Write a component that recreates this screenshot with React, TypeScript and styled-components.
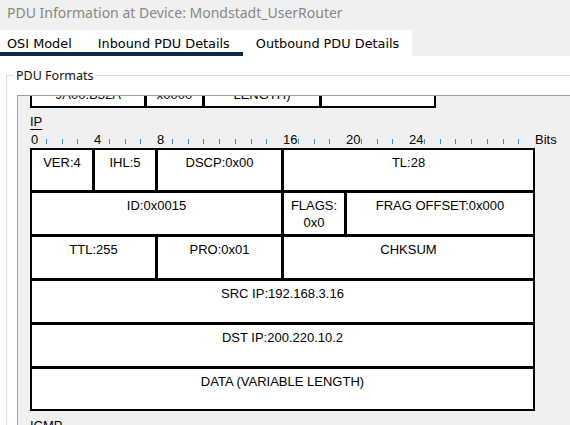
import React from "react";
import styled, { createGlobalStyle } from "styled-components";

const GlobalStyle = createGlobalStyle`
  html, body {
    margin: 0;
    padding: 0;
    background: #ffffff;
    overflow: hidden;
  }
  #root {
    width: 570px;
    height: 425px;
    overflow: hidden;
  }
`;

const Window = styled.div`
  width: 570px;
  height: 425px;
  background: #ffffff;
  overflow: hidden;
  display: flex;
  flex-direction: column;
  & > * {
    flex: none;
  }
`;

const TitleBar = styled.div`
  height: 30px;
  box-sizing: border-box;
  padding: 3px 0 0 7px;
  background: #f0f0f0;
  color: #878787;
  font-family: "Noto Sans", "Open Sans", sans-serif;
  font-size: 14px;
  line-height: 20px;
  white-space: nowrap;
`;

const TabBar = styled.div`
  height: 26px;
  background: #f0f0f0;
  display: flex;
`;

const TabStrip = styled.div`
  display: flex;
  background: #ffffff;
`;

const Tab = styled.div<{ $underlined?: boolean; $first?: boolean }>`
  height: 26px;
  box-sizing: border-box;
  padding: 6px 13px 0 ${(p) => (p.$first ? "7px" : "13px")};
  font-family: "DejaVu Sans", Verdana, sans-serif;
  font-size: 12.85px;
  line-height: 15px;
  color: #000000;
  white-space: nowrap;
  border-bottom: 4px solid ${(p) => (p.$underlined ? "#0f2847" : "transparent")};
`;

const GroupBox = styled.fieldset`
  margin: 12px 0 0 6px;
  padding: 12px 0 0 7px;
  width: 620px;
  height: 420px;
  box-sizing: border-box;
  border: 1px solid #dcdcdc;
  min-width: 0;
`;

const GroupLegend = styled.legend`
  padding: 0 2px;
  font-family: "Noto Sans", "Open Sans", sans-serif;
  font-size: 12.5px;
  line-height: 15px;
  color: #111111;
`;

const Panel = styled.div`
  margin-left: 3px;
  height: 400px;
  overflow: hidden;
  background: #f0f0f0;
  border-top: 1px solid #a0a0a0;
  border-left: 1px solid #a0a0a0;
  padding-left: 12px;
  font-family: "Liberation Sans", Arial, sans-serif;
  font-size: 13px;
  color: #000000;
`;

const EthTable = styled.div`
  margin-top: -33px;
  display: grid;
  grid-template-columns: 112px 55px 114px 112px;
  grid-template-rows: 41px;
  column-gap: 3px;
  padding: 2px;
  background: #000000;
  width: max-content;
`;

const EthCell = styled.div`
  background: #ffffff;
  display: flex;
  align-items: flex-end;
  justify-content: center;
  padding-bottom: 3px;
  box-sizing: border-box;
  line-height: 16px;
  white-space: nowrap;
  overflow: hidden;
`;

const SectionTitle = styled.div<{ $gap: number }>`
  margin-top: ${(p) => p.$gap}px;
  line-height: 16px;
  text-decoration: underline;
  text-underline-offset: 3px;
  width: max-content;
`;

const Ruler = styled.div`
  margin-top: 3px;
  height: 15px;
  display: flex;
  align-items: flex-start;
`;

const Slot = styled.div`
  width: 15.75px;
  flex: none;
  height: 15px;
`;

const Tick = styled.div`
  margin-top: 6px;
  width: 1px;
  height: 5px;
  background: #3a8ad6;
`;

const SlotNumber = styled.div`
  line-height: 14px;
  white-space: nowrap;
  padding-left: 1px;
`;

const BitsLabel = styled.div`
  line-height: 14px;
  padding-left: 1px;
`;

const FieldTable = styled.div`
  width: 505px;
  box-sizing: border-box;
  display: grid;
  grid-template-columns: repeat(32, minmax(0, 1fr));
  grid-template-rows: 40px 41px 41px 41px 41px 40px;
  gap: 3px;
  padding: 2px;
  background: #000000;
`;

const FieldCell = styled.div<{ $span: number }>`
  grid-column: span ${(p) => p.$span};
  background: #ffffff;
  box-sizing: border-box;
  padding-top: 5px;
  text-align: center;
  line-height: 16.5px;
  white-space: nowrap;
  overflow: hidden;
`;

type Field = { lines: string[]; span: number };

const ipRows: Field[][] = [
  [
    { lines: ["VER:4"], span: 4 },
    { lines: ["IHL:5"], span: 4 },
    { lines: ["DSCP:0x00"], span: 8 },
    { lines: ["TL:28"], span: 16 },
  ],
  [
    { lines: ["ID:0x0015"], span: 16 },
    { lines: ["FLAGS:", "0x0"], span: 4 },
    { lines: ["FRAG OFFSET:0x000"], span: 12 },
  ],
  [
    { lines: ["TTL:255"], span: 8 },
    { lines: ["PRO:0x01"], span: 8 },
    { lines: ["CHKSUM"], span: 16 },
  ],
  [{ lines: ["SRC IP:192.168.3.16"], span: 32 }],
  [{ lines: ["DST IP:200.220.10.2"], span: 32 }],
  [{ lines: ["DATA (VARIABLE LENGTH)"], span: 32 }],
];

const ethCells = ["9A00.B32A", "x0000", "LENGTH)", ""];

const labelled = new Set([0, 4, 8, 16, 20, 24]);

export default function App() {
  return (
    <>
      <GlobalStyle />
      <Window>
        <TitleBar>PDU Information at Device: Mondstadt_UserRouter</TitleBar>
        <TabBar>
          <TabStrip>
            <Tab $underlined $first>
              OSI Model
            </Tab>
            <Tab $underlined>Inbound PDU Details</Tab>
            <Tab>Outbound PDU Details</Tab>
          </TabStrip>
        </TabBar>
        <GroupBox>
          <GroupLegend>PDU Formats</GroupLegend>
          <Panel>
            <EthTable>
              {ethCells.map((t, i) => (
                <EthCell key={i}>{t}</EthCell>
              ))}
            </EthTable>
            <SectionTitle $gap={6}>IP</SectionTitle>
            <Ruler>
              {Array.from({ length: 32 }, (_, k) => (
                <Slot key={k}>
                  {labelled.has(k) ? <SlotNumber>{k}</SlotNumber> : <Tick />}
                </Slot>
              ))}
              <BitsLabel>Bits</BitsLabel>
            </Ruler>
            <FieldTable>
              {ipRows.flat().map((f, i) => (
                <FieldCell key={i} $span={f.span}>
                  {f.lines.map((l, j) => (
                    <div key={j}>{l}</div>
                  ))}
                </FieldCell>
              ))}
            </FieldTable>
            <SectionTitle $gap={7}>ICMP</SectionTitle>
          </Panel>
        </GroupBox>
      </Window>
    </>
  );
}
